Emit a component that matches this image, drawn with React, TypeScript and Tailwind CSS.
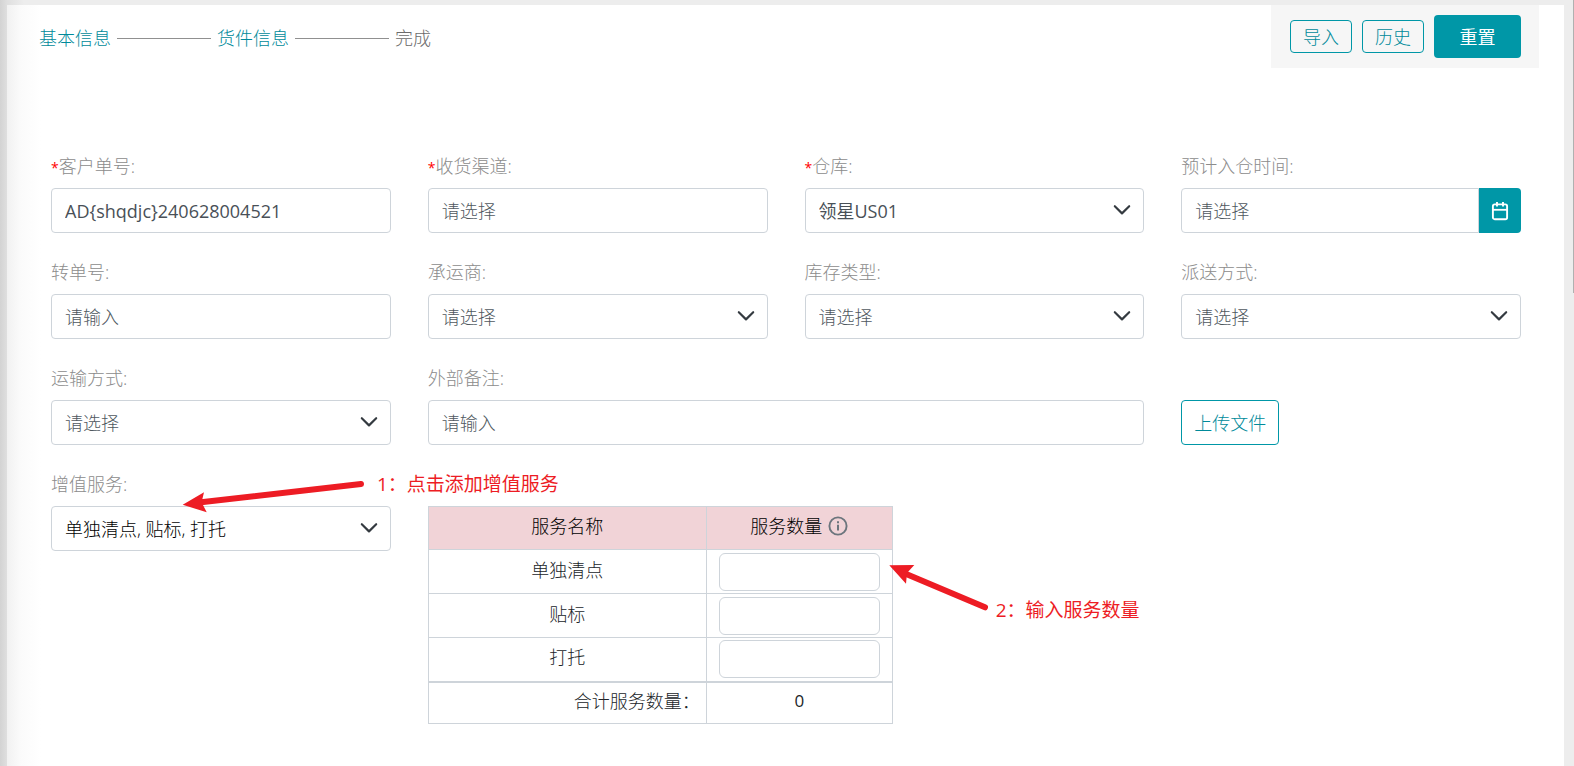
import { useState } from "react";
import type { ReactNode } from "react";
import { clsx } from "clsx";

const controlClass =
	"h-[45px] w-full rounded border border-[#ced4da] bg-white px-[13px] outline-none placeholder:text-[#4f5860] placeholder:opacity-100 focus:border-[#0097a7]";

const services = ["单独清点", "贴标", "打托"];

function ChevronIcon({ className }: { className?: string }) {
	return (
		<svg viewBox="0 0 16 16" fill="none" className={className}>
			<path
				d="M1.6 4.6l6.4 6.4L14.4 4.6"
				stroke="#343a40"
				strokeWidth="1.9"
				strokeLinecap="round"
				strokeLinejoin="round"
			/>
		</svg>
	);
}

function CalendarIcon({ className }: { className?: string }) {
	return (
		<svg viewBox="0 0 18 20" fill="none" className={className}>
			<rect x="1.9" y="3.4" width="14.2" height="14.8" rx="1.8" stroke="currentColor" strokeWidth="1.9" />
			<path d="M1.9 8.8h14.2" stroke="currentColor" strokeWidth="1.8" />
			<path d="M6 1v4.4M12 1v4.4" stroke="currentColor" strokeWidth="1.9" />
		</svg>
	);
}

function InfoIcon({ className }: { className?: string }) {
	return (
		<svg viewBox="0 0 20 20" fill="none" className={className}>
			<circle cx="10" cy="10" r="8.6" stroke="#6c757d" strokeWidth="1.9" />
			<path d="M10 8.8v5.8M10 5.2v2" stroke="#6c757d" strokeWidth="2" />
		</svg>
	);
}

type FieldProps = {
	id: string;
	label: string;
	required?: boolean;
	className?: string;
	children: ReactNode;
};

function Field({ id, label, required, className, children }: FieldProps) {
	return (
		<div className={clsx("relative", className)}>
			<label htmlFor={id} className="mb-2 block h-[27px] leading-[27px] text-[#8c8c8c]">
				{required && <span className="text-sm font-normal text-[#ff0000]">*</span>}
				{label}:
			</label>
			{children}
		</div>
	);
}

type SelectProps = {
	id: string;
	options: string[];
	filled?: string;
};

function Select({ id, options, filled }: SelectProps) {
	return (
		<div className="relative">
			<select
				id={id}
				className={clsx(controlClass, "appearance-none pr-10", filled ?? "text-[#4f5860]")}
			>
				{options.map((option) => (
					<option key={option}>{option}</option>
				))}
			</select>
			<ChevronIcon className="pointer-events-none absolute top-[13px] right-[13px] size-[18px]" />
		</div>
	);
}

function Steps() {
	return (
		<ol className="flex items-center pt-[19px] leading-[28px]">
			<li className="text-[#008a9a]">基本信息</li>
			<li aria-hidden="true" className="mx-[6px] h-px w-[94px] bg-[#909090]" />
			<li className="text-[#008a9a]">货件信息</li>
			<li aria-hidden="true" className="mx-[6px] h-px w-[94px] bg-[#909090]" />
			<li className="text-[#6c6c6c]">完成</li>
		</ol>
	);
}

function ServiceTable() {
	const [counts, setCounts] = useState<Record<string, string>>({});
	const total = services.reduce((sum, name) => sum + (Number(counts[name]) || 0), 0);

	return (
		<table className="w-[465px] table-fixed border-collapse text-center text-[#212529]">
			<thead>
				<tr className="h-[43px] bg-[#f1d3d7]">
					<th className="w-[278px] border border-[#ced4da] pb-1 font-light text-black">服务名称</th>
					<th className="border border-[#ced4da] pb-1 font-light text-black">
						<span className="flex items-center justify-center gap-[6px]">
							服务数量
							<InfoIcon className="size-5" />
						</span>
					</th>
				</tr>
			</thead>
			<tbody>
				{services.map((name) => (
					<tr key={name} className="h-11">
						<td className="border border-[#ced4da] pb-1">{name}</td>
						<td className="border border-[#ced4da] px-3">
							<input
								type="text"
								aria-label={name}
								value={counts[name] ?? ""}
								onChange={(e) => setCounts({ ...counts, [name]: e.target.value })}
								className="block h-[38px] w-full rounded-md border border-[#ced4da] px-2 text-center outline-none"
							/>
						</td>
					</tr>
				))}
			</tbody>
			<tfoot>
				<tr className="h-[42px] border-t-2 border-[#ced4da]">
					<td className="border-x border-b border-[#ced4da] pr-[6px] pb-1 text-right">合计服务数量：</td>
					<td className="border-x border-b border-[#ced4da] pb-1 text-[17px] font-normal">{total}</td>
				</tr>
			</tfoot>
		</table>
	);
}

export default function App() {
	return (
		<div className="relative flex min-h-screen bg-[linear-gradient(90deg,#d3d3d3_0,#dfdfdf_7px,#ededed_24px)] pt-[5px] pr-[10px] pl-[7px] font-['Open_Sans','Noto_Sans_CJK_SC',sans-serif] text-lg font-light">
			<main className="flex-1 bg-[linear-gradient(90deg,#f1f1f1_0,#fbfbfb_14px,#ffffff_34px)]">
				<header className="flex items-start justify-between pr-[25px] pl-8">
					<Steps />
					<div className="flex h-[63px] items-center gap-[10px] bg-[#f6f6f6] pr-[18px] pl-[19px]">
						<button className="h-[33px] w-[62px] rounded border border-[#0097a7] pt-px leading-[31px] text-[#008a9a]">
							导入
						</button>
						<button className="h-[33px] w-[62px] rounded border border-[#0097a7] pt-px leading-[31px] text-[#008a9a]">
							历史
						</button>
						<button className="h-[43px] w-[87px] rounded bg-[#0097a7] font-normal text-white">
							重置
						</button>
					</div>
				</header>

				<form className="grid grid-cols-4 gap-x-[37px] gap-y-[26px] pt-[85px] pr-[43px] pb-10 pl-11">
					<Field id="order-no" label="客户单号" required>
						<input
							id="order-no"
							type="text"
							defaultValue="AD{shqdjc}240628004521"
							className={clsx(controlClass, "font-normal text-[#495057]")}
						/>
					</Field>
					<Field id="channel" label="收货渠道" required>
						<input id="channel" type="text" placeholder="请选择" className={controlClass} />
					</Field>
					<Field id="warehouse" label="仓库" required>
						<Select id="warehouse" options={["领星US01"]} filled="font-normal text-[#495057]" />
					</Field>
					<Field id="arrival" label="预计入仓时间">
						<div className="flex">
							<input
								id="arrival"
								type="text"
								placeholder="请选择"
								className={clsx(controlClass, "min-w-0 flex-1 rounded-r-none")}
							/>
							<button
								type="button"
								aria-label="选择日期"
								className="flex h-[45px] w-[42px] shrink-0 items-center justify-center rounded-r bg-[#0097a7] text-white"
							>
								<CalendarIcon className="h-5 w-[18px]" />
							</button>
						</div>
					</Field>

					<Field id="transfer-no" label="转单号">
						<input id="transfer-no" type="text" placeholder="请输入" className={controlClass} />
					</Field>
					<Field id="carrier" label="承运商">
						<Select id="carrier" options={["请选择"]} />
					</Field>
					<Field id="stock-type" label="库存类型">
						<Select id="stock-type" options={["请选择"]} />
					</Field>
					<Field id="delivery" label="派送方式">
						<Select id="delivery" options={["请选择"]} />
					</Field>

					<Field id="transport" label="运输方式">
						<Select id="transport" options={["请选择"]} />
					</Field>
					<Field id="remark" label="外部备注" className="col-span-2">
						<input id="remark" type="text" placeholder="请输入" className={controlClass} />
					</Field>
					<div className="flex items-end">
						<button
							type="button"
							className="h-[45px] rounded border border-[#0097a7] bg-white px-3 text-[#008a9a]"
						>
							上传文件
						</button>
					</div>

					<Field id="extra" label="增值服务">
						<Select id="extra" options={["单独清点, 贴标, 打托"]} filled="text-black" />
						{/* Step 1 callout */}
						<svg
							viewBox="0 0 186 34"
							className="pointer-events-none absolute top-[9px] left-[130px] h-[34px] w-[186px]"
						>
							<path d="M20 22.2L180 4" stroke="#ed1c24" strokeWidth="6" strokeLinecap="round" />
							<path d="M1.7 24.7L23 12.3L20.6 22.2L25.7 32.3Z" fill="#ed1c24" />
						</svg>
						<p className="pointer-events-none absolute top-0 left-[326px] text-[19px] leading-[27px] font-normal whitespace-nowrap text-[#ed1c24]">
							1：点击添加增值服务
						</p>
					</Field>
					<div className="col-span-3 pt-[35px]">
						<div className="relative w-[465px]">
							<ServiceTable />
							{/* Step 2 callout */}
							<svg
								viewBox="0 0 104 50"
								className="pointer-events-none absolute top-[57px] left-[459px] h-[50px] w-[104px]"
							>
								<path d="M18 10.5L98 44.3" stroke="#ed1c24" strokeWidth="6" strokeLinecap="round" />
								<path d="M2.3 2.3L27.3 2L20 10L19 20.7Z" fill="#ed1c24" />
							</svg>
							<p className="pointer-events-none absolute top-[91px] left-[568px] text-[19px] leading-[27px] font-normal whitespace-nowrap text-[#ed1c24]">
								2：输入服务数量
							</p>
						</div>
					</div>
				</form>
			</main>
			{/* Scrollbar thumb */}
			<div className="absolute top-0 right-0 h-[293px] w-px bg-[#b0b0b0]" />
		</div>
	);
}
